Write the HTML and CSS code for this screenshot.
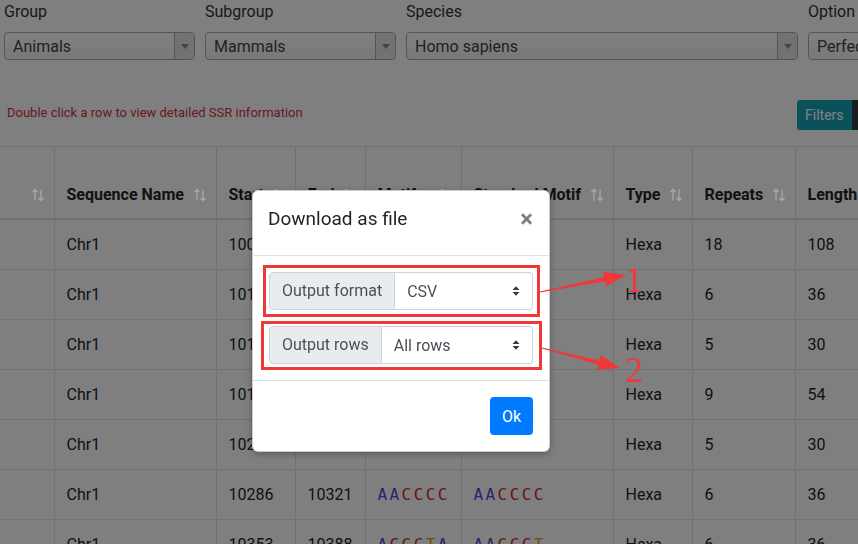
FILE: index.html
```html
<!DOCTYPE html>
<html>
<head>
<meta charset="utf-8">
<title>SSR browser</title>
<link rel="stylesheet" href="styles.css">
</head>
<body>
<div class="page">
  <div class="filters">
    <div class="field">
      <div class="flabel">Group</div>
      <div class="fselect"><span class="fval">Animals</span><span class="farrow"><i></i></span></div>
    </div>
    <div class="field">
      <div class="flabel">Subgroup</div>
      <div class="fselect"><span class="fval">Mammals</span><span class="farrow"><i></i></span></div>
    </div>
    <div class="field">
      <div class="flabel">Species</div>
      <div class="fselect"><span class="fval">Homo sapiens</span><span class="farrow"><i></i></span></div>
    </div>
    <div class="field">
      <div class="flabel">Option</div>
      <div class="fselect"><span class="fval">Perfect SSRs</span><span class="farrow"><i></i></span></div>
    </div>
  </div>

  <div class="toolbar">
    <div class="hint">Double click a row to view detailed SSR information</div>
    <div class="btn-group">
      <button class="btn btn-info">Filters</button>
      <button class="btn btn-dark">Columns</button>
    </div>
  </div>

  <table class="grid">
    <colgroup>
      <col class="c0"><col class="c1"><col class="c2"><col class="c3"><col class="c4"><col class="c5"><col class="c6"><col class="c7"><col class="c8">
    </colgroup>
    <thead>
      <tr>
        <th><div class="th"><span></span><svg class="sort" viewBox="0 0 14 14"><path d="M4 12.5V1.5M1.5 4L4 1.5 6.5 4M10 1.5v11M7.5 10l2.5 2.5 2.5-2.5"/></svg></div></th>
        <th><div class="th"><span>Sequence Name</span><svg class="sort" viewBox="0 0 14 14"><path d="M4 12.5V1.5M1.5 4L4 1.5 6.5 4M10 1.5v11M7.5 10l2.5 2.5 2.5-2.5"/></svg></div></th>
        <th><div class="th"><span>Start</span><svg class="sort" viewBox="0 0 14 14"><path d="M4 12.5V1.5M1.5 4L4 1.5 6.5 4M10 1.5v11M7.5 10l2.5 2.5 2.5-2.5"/></svg></div></th>
        <th><div class="th"><span>End</span><svg class="sort" viewBox="0 0 14 14"><path d="M4 12.5V1.5M1.5 4L4 1.5 6.5 4M10 1.5v11M7.5 10l2.5 2.5 2.5-2.5"/></svg></div></th>
        <th><div class="th"><span>Motif</span><svg class="sort" viewBox="0 0 14 14"><path d="M4 12.5V1.5M1.5 4L4 1.5 6.5 4M10 1.5v11M7.5 10l2.5 2.5 2.5-2.5"/></svg></div></th>
        <th><div class="th"><span>Standard Motif</span><svg class="sort" viewBox="0 0 14 14"><path d="M4 12.5V1.5M1.5 4L4 1.5 6.5 4M10 1.5v11M7.5 10l2.5 2.5 2.5-2.5"/></svg></div></th>
        <th><div class="th"><span>Type</span><svg class="sort" viewBox="0 0 14 14"><path d="M4 12.5V1.5M1.5 4L4 1.5 6.5 4M10 1.5v11M7.5 10l2.5 2.5 2.5-2.5"/></svg></div></th>
        <th><div class="th"><span>Repeats</span><svg class="sort" viewBox="0 0 14 14"><path d="M4 12.5V1.5M1.5 4L4 1.5 6.5 4M10 1.5v11M7.5 10l2.5 2.5 2.5-2.5"/></svg></div></th>
        <th><div class="th"><span>Length</span><svg class="sort" viewBox="0 0 14 14"><path d="M4 12.5V1.5M1.5 4L4 1.5 6.5 4M10 1.5v11M7.5 10l2.5 2.5 2.5-2.5"/></svg></div></th>
      </tr>
    </thead>
    <tbody>
      <tr><td></td><td>Chr1</td><td>10003</td><td>10110</td><td class="seq"><span class="nA">A</span><span class="nA">A</span><span class="nC">C</span><span class="nC">C</span><span class="nC">C</span><span class="nT">T</span></td><td class="seq"><span class="nA">A</span><span class="nA">A</span><span class="nC">C</span><span class="nC">C</span><span class="nC">C</span><span class="nT">T</span></td><td>Hexa</td><td>18</td><td>108</td></tr>
      <tr><td></td><td>Chr1</td><td>10111</td><td>10146</td><td class="seq"><span class="nA">A</span><span class="nA">A</span><span class="nC">C</span><span class="nC">C</span><span class="nC">C</span><span class="nT">T</span></td><td class="seq"><span class="nA">A</span><span class="nA">A</span><span class="nC">C</span><span class="nC">C</span><span class="nC">C</span><span class="nT">T</span></td><td>Hexa</td><td>6</td><td>36</td></tr>
      <tr><td></td><td>Chr1</td><td>10150</td><td>10179</td><td class="seq"><span class="nA">A</span><span class="nC">C</span><span class="nC">C</span><span class="nC">C</span><span class="nT">T</span><span class="nA">A</span></td><td class="seq"><span class="nA">A</span><span class="nA">A</span><span class="nC">C</span><span class="nC">C</span><span class="nC">C</span><span class="nT">T</span></td><td>Hexa</td><td>5</td><td>30</td></tr>
      <tr><td></td><td>Chr1</td><td>10187</td><td>10240</td><td class="seq"><span class="nA">A</span><span class="nA">A</span><span class="nC">C</span><span class="nC">C</span><span class="nC">C</span><span class="nT">T</span></td><td class="seq"><span class="nA">A</span><span class="nA">A</span><span class="nC">C</span><span class="nC">C</span><span class="nC">C</span><span class="nT">T</span></td><td>Hexa</td><td>9</td><td>54</td></tr>
      <tr><td></td><td>Chr1</td><td>10246</td><td>10275</td><td class="seq"><span class="nA">A</span><span class="nA">A</span><span class="nC">C</span><span class="nC">C</span><span class="nC">C</span><span class="nT">T</span></td><td class="seq"><span class="nA">A</span><span class="nA">A</span><span class="nC">C</span><span class="nC">C</span><span class="nC">C</span><span class="nT">T</span></td><td>Hexa</td><td>5</td><td>30</td></tr>
      <tr><td></td><td>Chr1</td><td>10286</td><td>10321</td><td class="seq"><span class="nA">A</span><span class="nA">A</span><span class="nC">C</span><span class="nC">C</span><span class="nC">C</span><span class="nC">C</span></td><td class="seq"><span class="nA">A</span><span class="nA">A</span><span class="nC">C</span><span class="nC">C</span><span class="nC">C</span><span class="nC">C</span></td><td>Hexa</td><td>6</td><td>36</td></tr>
      <tr><td></td><td>Chr1</td><td>10353</td><td>10388</td><td class="seq"><span class="nA">A</span><span class="nC">C</span><span class="nC">C</span><span class="nC">C</span><span class="nT">T</span><span class="nA">A</span></td><td class="seq"><span class="nA">A</span><span class="nA">A</span><span class="nC">C</span><span class="nC">C</span><span class="nC">C</span><span class="nT">T</span></td><td>Hexa</td><td>6</td><td>36</td></tr>
    </tbody>
  </table>
</div>

<div class="backdrop"></div>

<div class="modal">
  <div class="mhead">
    <h5 class="mtitle">Download as file</h5>
    <span class="close">×</span>
  </div>
  <div class="mbody">
    <div class="igroup">
      <span class="ilabel">Output format</span>
      <div class="iselect"><span>CSV</span><svg class="updown" viewBox="0 0 8 12"><path d="M0.5 5L4 1.3 7.5 5zM0.5 7L4 10.7 7.5 7z"/></svg></div>
    </div>
    <div class="igroup">
      <span class="ilabel">Output rows</span>
      <div class="iselect"><span>All rows</span><svg class="updown" viewBox="0 0 8 12"><path d="M0.5 5L4 1.3 7.5 5zM0.5 7L4 10.7 7.5 7z"/></svg></div>
    </div>
  </div>
  <div class="mfoot">
    <button class="ok">Ok</button>
  </div>
</div>

<svg class="annot" viewBox="0 0 858 544" width="858" height="544">
  <rect x="264.5" y="266.5" width="274" height="49" class="abox"/>
  <rect x="262.5" y="322.5" width="278" height="46" class="abox"/>
  <polygon class="aarrow" points="539.9,291.5 604,277.3 603,271.8 626,275 606.2,286.6 604.8,281.3 540.1,292.5"/>
  <polygon class="aarrow" points="542.1,347.5 599.2,360.6 601,355 620,368 596.6,369.8 598.2,364.4 541.9,348.5"/>
  <text x="625" y="292" class="anum">1</text>
  <text x="625" y="382" class="anum">2</text>
</svg>
</body>
</html>
```

FILE: styles.css
```css
html, body {
  margin: 0;
  overflow: hidden;
}

body {
  position: relative;
  width: 858px;
  height: 544px;
  font-family: Roboto, "Liberation Sans", sans-serif;
  color: #212529;
  background: #fff;
}

.page {
  width: 926px;
}

/* filter selects */
.filters {
  display: grid;
  grid-template-columns: 191px 191px 392px 1fr;
  column-gap: 10px;
  padding: 0 4px;
}

.flabel {
  font-size: 16px;
  line-height: 24px;
  color: #333;
  margin-bottom: 8px;
}

.fselect {
  display: flex;
  height: 28px;
  box-sizing: border-box;
  border: 1px solid #aaa;
  border-radius: 4px;
  background: linear-gradient(#fff 20%, #f1f1f1);
}

.fval {
  flex: 1;
  padding: 1px 0 0 8px;
  font-size: 16px;
  line-height: 26px;
  color: #444;
  white-space: nowrap;
  overflow: hidden;
}

.farrow {
  width: 19px;
  border-left: 1px solid #aaa;
  background: #e4e4e4;
  border-radius: 0 4px 4px 0;
  display: flex;
  align-items: center;
  justify-content: center;
}

.farrow i {
  width: 0;
  height: 0;
  border-left: 4px solid transparent;
  border-right: 4px solid transparent;
  border-top: 5px solid #888;
}

/* toolbar */
.toolbar {
  display: flex;
  align-items: center;
  padding: 40px 3px 0 7px;
}

.hint {
  flex: 1;
  font-size: 13px;
  color: #d2303f;
  padding-bottom: 6px;
}

.btn-group {
  display: flex;
}

.btn {
  font-family: inherit;
  font-size: 14px;
  height: 30px;
  border: 0;
  padding: 0 8px;
  color: #fff;
}

.btn-info {
  background: #17a2b8;
  border-radius: 3px 0 0 3px;
}

.btn-dark {
  background: #343a40;
  border-radius: 0 3px 3px 0;
}

/* table */
.grid {
  margin-top: 16px;
  border-collapse: collapse;
  table-layout: fixed;
  width: 915px;
}

.c0 { width: 54px; }
.c1 { width: 162px; }
.c2 { width: 79px; }
.c3 { width: 70px; }
.c4 { width: 96px; }
.c5 { width: 152px; }
.c6 { width: 79px; }
.c7 { width: 103px; }
.c8 { width: 120px; }

.grid th {
  padding: 12px 9px 11px 12px;
  border: 1px solid #dee2e6;
  border-bottom: 2px solid #dee2e6;
  vertical-align: bottom;
  text-align: left;
  font-size: 16px;
  font-weight: 700;
}

.th {
  display: flex;
  justify-content: space-between;
  align-items: flex-end;
  height: 48px;
  line-height: 24px;
  white-space: nowrap;
}

/* sort indicators are drawn highlighted above the dimmed page */
.sort {
  position: relative;
  z-index: 15;
  width: 14px;
  height: 14px;
  margin-bottom: 5px;
  fill: none;
  stroke: #a6a9ad;
  stroke-width: 1.3;
}

.grid td {
  padding: 12px;
  border: 1px solid #dee2e6;
  font-size: 16px;
  line-height: 25px;
  white-space: nowrap;
  overflow: hidden;
}

.grid th:first-child,
.grid td:first-child {
  border-left: 0;
}

.seq {
  font-family: "DejaVu Sans Mono", monospace;
  font-size: 15px;
  letter-spacing: 2.4px;
}

.nA { color: #4d4dd8; }
.nC { color: #d42a2a; }
.nT { color: #e6a21a; }
.nG { color: #2f9e2f; }

/* modal */
.backdrop {
  position: fixed;
  inset: 0;
  background: rgba(0, 0, 0, 0.5);
  z-index: 10;
}

.modal {
  position: absolute;
  left: 252px;
  top: 190px;
  width: 298px;
  box-sizing: border-box;
  background: #fff;
  border: 1px solid rgba(0, 0, 0, 0.2);
  border-radius: 6px;
  box-shadow: 0 2px 6px rgba(0, 0, 0, 0.3);
  z-index: 20;
}

.mhead {
  display: flex;
  justify-content: space-between;
  align-items: flex-start;
  padding: 16px 16px 24px 15px;
  border-bottom: 1px solid #dee2e6;
}

.mtitle {
  margin: 0;
  font-size: 19px;
  line-height: 24px;
  font-weight: 400;
  color: #212529;
}

.close {
  font-size: 24px;
  font-weight: 700;
  line-height: 24px;
  color: #000;
  opacity: 0.5;
}

.mbody {
  padding: 16px;
}

.igroup {
  display: flex;
  height: 38px;
  font-size: 16px;
  color: #495057;
}

.igroup + .igroup {
  margin-top: 16px;
}

.ilabel {
  padding: 0 12px;
  line-height: 36px;
  border: 1px solid #ced4da;
  background: #e9ecef;
  border-radius: 4px 0 0 4px;
  white-space: nowrap;
}

.iselect {
  flex: 1;
  display: flex;
  align-items: center;
  justify-content: space-between;
  padding: 0 12px;
  border: 1px solid #ced4da;
  border-left: 0;
  border-radius: 0 4px 4px 0;
}

.updown {
  width: 8px;
  height: 12px;
  fill: #343a40;
}

.mfoot {
  display: flex;
  justify-content: flex-end;
  padding: 16px;
  border-top: 1px solid #dee2e6;
}

.ok {
  height: 38px;
  padding: 0 12px;
  border: 0;
  border-radius: 4px;
  background: #007bff;
  color: #fff;
  font-family: inherit;
  font-size: 16px;
}

/* annotations drawn over the screenshot */
.annot {
  position: absolute;
  left: 0;
  top: 0;
  z-index: 30;
}

.abox {
  fill: none;
  stroke: #f03838;
  stroke-width: 3;
}

.aarrow {
  fill: #f03838;
}

.anum {
  font-family: "Liberation Serif", serif;
  font-size: 36px;
  fill: #f03838;
}
```
